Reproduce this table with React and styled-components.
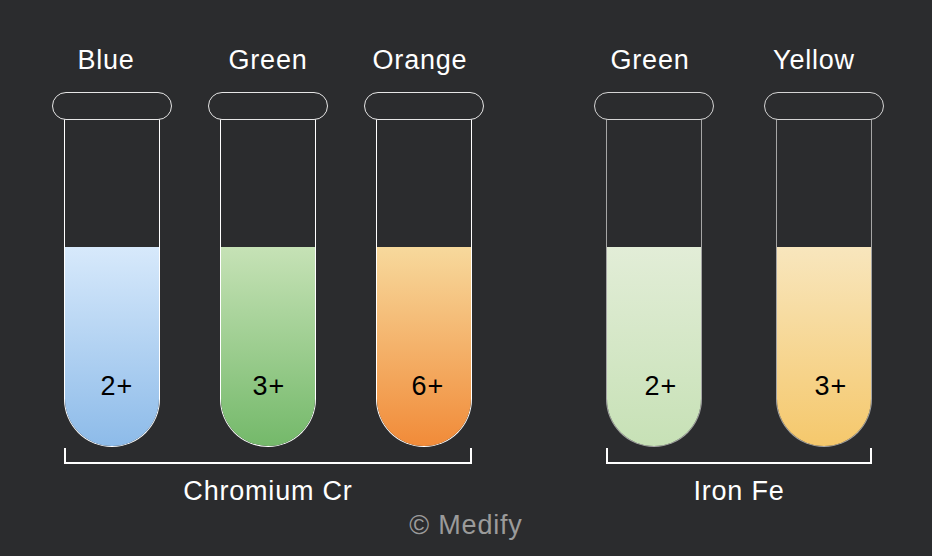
import React from "react";
import styled, { createGlobalStyle } from "styled-components";

const GlobalStyle = createGlobalStyle`
  html, body {
    margin: 0;
    padding: 0;
    background: #2b2c2e;
  }
  body {
    font-family: "Liberation Sans", Arial, sans-serif;
  }
`;

const groups = [
  {
    name: "Chromium Cr",
    gap: 36,
    bodyLine: "#ffffff",
    capLine: "#e6e6e6",
    tubes: [
      { label: "Blue", pull: 12, ion: "2+", top: "#d7e9fb", bottom: "#8dbbe9", shift: 10 },
      { label: "Green", pull: 0, ion: "3+", top: "#c6e2b6", bottom: "#74b96a", shift: 2 },
      { label: "Orange", pull: 8, ion: "6+", top: "#f7d99c", bottom: "#f18b39", shift: 8 },
    ],
  },
  {
    name: "Iron Fe",
    gap: 50,
    bodyLine: "#a6a6a6",
    capLine: "#d4d4d4",
    tubes: [
      { label: "Green", pull: 8, ion: "2+", top: "#e2edd7", bottom: "#c7e1b6", shift: 14 },
      { label: "Yellow", pull: 20, ion: "3+", top: "#f8e6bd", bottom: "#f5c86c", shift: 14 },
    ],
  },
];

const App = () => {
  return (
    <>
      <GlobalStyle />
      <Page>
        <GroupRow>
          {groups.map((group) => (
            <Group key={group.name}>
              <TubeRow $gap={group.gap}>
                {group.tubes.map((tube) => (
                  <TubeColumn key={tube.label + tube.ion}>
                    <Label $pull={tube.pull}>{tube.label}</Label>
                    <Cap $line={group.capLine} />
                    <Body $line={group.bodyLine}>
                      <Liquid $top={tube.top} $bottom={tube.bottom} $shift={tube.shift}>
                        {tube.ion}
                      </Liquid>
                    </Body>
                  </TubeColumn>
                ))}
              </TubeRow>
              <Bracket />
              <GroupName>{group.name}</GroupName>
            </Group>
          ))}
        </GroupRow>
        <Credit>© Medify</Credit>
      </Page>
    </>
  );
};

const Page = styled.div`
  width: 932px;
  height: 556px;
  box-sizing: border-box;
  padding-top: 44px;
  background: #2b2c2e;
  display: flex;
  flex-direction: column;
  overflow: hidden;
`;

const GroupRow = styled.div`
  display: flex;
  gap: 110px;
  padding-left: 52px;
`;

const Group = styled.div`
  display: flex;
  flex-direction: column;
  align-items: stretch;
`;

const TubeRow = styled.div`
  display: flex;
  gap: ${({ $gap }) => $gap}px;
`;

const TubeColumn = styled.div`
  width: 120px;
  display: flex;
  flex-direction: column;
  align-items: center;
`;

const Label = styled.div`
  height: 32px;
  line-height: 32px;
  font-size: 27px;
  letter-spacing: 0.8px;
  color: #ffffff;
  margin-bottom: 16px;
  margin-right: ${({ $pull }) => $pull}px;
  white-space: nowrap;
`;

const Cap = styled.div`
  width: 120px;
  height: 28px;
  box-sizing: border-box;
  border: 1.5px solid ${({ $line }) => $line};
  border-radius: 14px;
  background: #2b2c2e;
  position: relative;
  z-index: 1;
`;

const Body = styled.div`
  width: 96px;
  height: 328px;
  margin-top: -1px;
  box-sizing: border-box;
  border: 1.5px solid ${({ $line }) => $line};
  border-top: none;
  border-radius: 0 0 48px 48px;
  overflow: hidden;
  display: flex;
  flex-direction: column;
  justify-content: flex-end;
`;

const Liquid = styled.div`
  height: 199px;
  box-sizing: border-box;
  padding-top: 123px;
  padding-left: ${({ $shift }) => $shift}px;
  background: linear-gradient(${({ $top }) => $top}, ${({ $bottom }) => $bottom});
  text-align: center;
  font-size: 27px;
  line-height: 32px;
  letter-spacing: 1px;
  color: #000000;
`;

const Bracket = styled.div`
  height: 14px;
  margin: 1px 12px 0;
  border: 2px solid #ffffff;
  border-top: none;
`;

const GroupName = styled.div`
  margin-top: 11px;
  height: 32px;
  line-height: 32px;
  font-size: 27px;
  letter-spacing: 0.8px;
  color: #ffffff;
  text-align: center;
  white-space: nowrap;
`;

const Credit = styled.div`
  margin-top: 2px;
  height: 32px;
  line-height: 32px;
  font-size: 27px;
  letter-spacing: 0.8px;
  color: #9b9b9b;
  text-align: center;
`;

export default App;
